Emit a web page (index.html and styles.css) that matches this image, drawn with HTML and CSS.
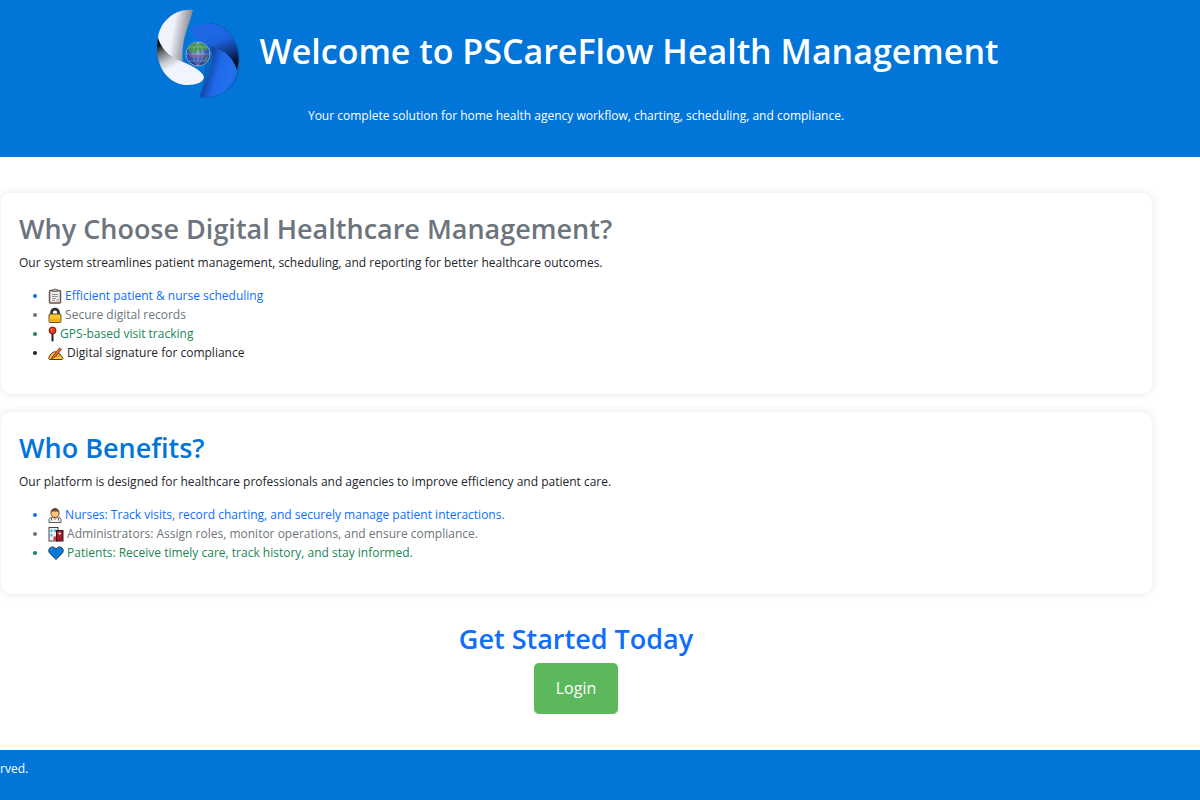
FILE: index.html
```html
<!DOCTYPE html>
<html lang="en">
<head>
    <meta charset="UTF-8">
    <meta name="viewport" content="width=device-width, initial-scale=1.0">
    <title>PSCareFlow Health Management</title>
    <link rel="stylesheet" href="styles.css">
</head>
<body>
    <header class="header">
        <div class="header-inner">
            <div class="brand">
                <svg class="logo" viewBox="-1 -1 90 90" aria-hidden="true">
                    <defs>
                        <linearGradient id="silverTop" gradientUnits="userSpaceOnUse" x1="3" y1="24" x2="38" y2="30">
                            <stop offset="0.4" stop-color="#f0f2fc"/>
                            <stop offset="0.8" stop-color="#96979f"/>
                            <stop offset="1" stop-color="#77777c"/>
                        </linearGradient>
                        <linearGradient id="silverLow" gradientUnits="userSpaceOnUse" x1="8" y1="34" x2="24" y2="66">
                            <stop offset="0" stop-color="#111"/>
                            <stop offset="0.2" stop-color="#666"/>
                            <stop offset="0.5" stop-color="#c6c8d0"/>
                            <stop offset="0.75" stop-color="#f2f4ff"/>
                        </linearGradient>
                        <linearGradient id="blueTop" gradientUnits="userSpaceOnUse" x1="62" y1="20" x2="76" y2="56">
                            <stop offset="0" stop-color="#1e68e8"/>
                            <stop offset="0.3" stop-color="#1d62dc"/>
                            <stop offset="0.65" stop-color="#103a8c"/>
                            <stop offset="1" stop-color="#020a20"/>
                        </linearGradient>
                        <linearGradient id="blueLow" gradientUnits="userSpaceOnUse" x1="44" y1="66" x2="72" y2="74">
                            <stop offset="0" stop-color="#0a2c80"/>
                            <stop offset="0.6" stop-color="#1f6ae8"/>
                            <stop offset="1" stop-color="#2270ee"/>
                        </linearGradient>
                        <radialGradient id="globe" cx="0.5" cy="0.4" r="0.6">
                            <stop offset="0" stop-color="#7fa6e0"/>
                            <stop offset="0.7" stop-color="#2f4fae"/>
                            <stop offset="1" stop-color="#27387c"/>
                        </radialGradient>
                    </defs>
                    <path d="M46 89C64 90 80 80 84 63C88 40 80 19 56 13Z" fill="#0864bd"/>
                    <path d="M38 1C20-1 4 13 3 30C8 44 17 49 28 54C26 30 33 20 38 1Z" fill="url(#silverTop)"/>
                    <path d="M3 29C8 44 18 49 28 53C38 57 47 62 49 68C49 73 41 76 33 76C14 76-2 58 3 29Z" fill="url(#silverLow)"/>
                    <path d="M56 36C68 40 78 48 82 61C80 78 65 90 45 88C46 78 62 60 56 36Z" fill="url(#blueLow)"/>
                    <path d="M35 21C44 12 66 12 76 27C84 38 85 50 82 61C78 48 70 42 58 38C48 34 38 30 35 21Z" fill="url(#blueTop)"/>
                    <circle cx="43" cy="45" r="12" fill="url(#globe)" stroke="#8fa6c8" stroke-width="1"/>
                    <path d="M33 40C35 34 40 33 45 34L51 36L53 41L48 40L46 44L43 41L39 45L35 43ZM50 50L53 46L52 51L48 53Z" fill="#48924b"/>
                    <path d="M31 45H55M43 33V57M34 38H52M34 52H52M43 33Q33 45 43 57M43 33Q53 45 43 57" fill="none" stroke="#b9cbe8" stroke-width="0.4"/>
                    <path d="M34 47H51" stroke="#c4455c" stroke-width="1"/>
                </svg>
                <h1>Welcome to PSCareFlow Health Management</h1>
            </div>
            <p>Your complete solution for home health agency workflow, charting, scheduling, and compliance.</p>
        </div>
    </header>

    <main class="content">
        <section class="card">
            <h2 class="text-secondary">Why Choose Digital Healthcare Management?</h2>
            <p>Our system streamlines patient management, scheduling, and reporting for better healthcare outcomes.</p>
            <ul>
                <li class="text-primary">
                    <svg class="icon" viewBox="0 0 14 16" aria-hidden="true">
                        <rect x="1.5" y="2.5" width="11" height="12.5" rx="1" fill="#eee" stroke="#6f5145" stroke-width="1.5"/>
                        <path d="M4.5 3.5V1.8H6L7 .6L8 1.8H9.5V3.5Z" fill="#aaa" stroke="#555" stroke-width="0.7"/>
                        <path d="M4 6.5H10M4 8.5H10M4 10.5H8M4 12.5H7" stroke="#888" stroke-width="0.9"/>
                        <path d="M8.5 14.5V11H12Z" fill="#bbb"/>
                    </svg>
                    Efficient patient &amp; nurse scheduling
                </li>
                <li class="text-secondary">
                    <svg class="icon" viewBox="0 0 14 16" aria-hidden="true">
                        <path d="M3.5 8V5.5C3.5 1 10.5 1 10.5 5.5V8" fill="none" stroke="#222" stroke-width="2.6"/>
                        <path d="M3.5 8V5.5C3.5 1 10.5 1 10.5 5.5V8" fill="none" stroke="#555" stroke-width="0.7"/>
                        <rect x="1" y="7" width="12" height="8.5" rx="1" fill="#ffc72c" stroke="#403010" stroke-width="0.8"/>
                        <path d="M1.5 12H12.5V14.5H1.5Z" fill="#f5a913"/>
                    </svg>
                    Secure digital records
                </li>
                <li class="text-success">
                    <svg class="icon icon-pin" viewBox="0 0 9 16" aria-hidden="true">
                        <path d="M4.5 7V14.5" stroke="#222" stroke-width="2" stroke-linecap="round"/>
                        <circle cx="4.5" cy="4.5" r="3.5" fill="#e83a1c" stroke="#451510" stroke-width="0.8"/>
                        <circle cx="3.6" cy="3.5" r="1" fill="#ff8066"/>
                    </svg>
                    GPS-based visit tracking
                </li>
                <li class="text-dark">
                    <svg class="icon icon-wide" viewBox="0 0 16 16" aria-hidden="true">
                        <path d="M.7 13.5C1 10 4 7.5 7 6.5L9 8L12 9L15 13.5Q15 14.5 13 14.5H1.5Z" fill="#ffc83d" stroke="#3b2a12" stroke-width="0.9"/>
                        <path d="M4 12L11.5 3L13.5 4.5L6.5 12.5L3.5 13.5Z" fill="#ed6c20" stroke="#53240d" stroke-width="0.7"/>
                        <path d="M8 12L10 10.5L12 11" fill="none" stroke="#b77a14" stroke-width="1"/>
                    </svg>
                    Digital signature for compliance
                </li>
            </ul>
        </section>

        <section class="card">
            <h2 class="text-brand">Who Benefits?</h2>
            <p>Our platform is designed for healthcare professionals and agencies to improve efficiency and patient care.</p>
            <ul>
                <li class="text-primary">
                    <svg class="icon" viewBox="0 0 14 16" aria-hidden="true">
                        <path d="M1 15.5V13C1 10.5 3.5 10 7 10S13 10.5 13 13V15.5Z" fill="#f3f5f7" stroke="#333" stroke-width="0.8"/>
                        <path d="M5 9H9V11L7 13.5L5 11Z" fill="#efad55"/>
                        <path d="M3 5.5C3 .5 11 .5 11 5.5V7C11 9 9 10.5 7 10.5S3 9 3 7Z" fill="#ffc77d" stroke="#4b2818" stroke-width="0.8"/>
                        <path d="M2.7 6C2.5-.5 11.5-.5 11.3 6L10 4.5L4 4.5Z" fill="#70442f"/>
                        <path d="M3.5 11V13.5M10.5 11V13.5" stroke="#257bd0" stroke-width="1.2"/>
                    </svg>
                    Nurses: Track visits, record charting, and securely manage patient interactions.
                </li>
                <li class="text-secondary">
                    <svg class="icon icon-wide" viewBox="0 0 16 16" aria-hidden="true">
                        <rect x="1" y="1.5" width="9" height="13.5" fill="#edf1f4" stroke="#444" stroke-width="1"/>
                        <rect x="8.5" y="4.5" width="6.5" height="10.5" fill="#a61b2b" stroke="#35181c" stroke-width="1"/>
                        <path d="M2.5 3.5H4.5V6H2.5ZM6 3.5H8V6H6ZM2.5 8H4.5V10.5H2.5Z" fill="#35bde6"/>
                        <path d="M5.5 10.5H8V14.5H5.5Z" fill="#d5303b"/>
                        <path d="M10.5 7.5H13M11.75 6.25V8.75" stroke="#fff" stroke-width="1"/>
                    </svg>
                    Administrators: Assign roles, monitor operations, and ensure compliance.
                </li>
                <li class="text-success">
                    <svg class="icon icon-wide" viewBox="0 0 16 16" aria-hidden="true">
                        <path d="M8 14.5L2 8.5C-.5 6 1 2 4.5 2C6.2 2 7.3 3 8 4.2C8.7 3 9.8 2 11.5 2C15 2 16.5 6 14 8.5Z" fill="#0878d8" stroke="#10273e" stroke-width="0.9"/>
                        <path d="M2.5 5.5Q3 3.5 5 3.3" fill="none" stroke="#48a9ed" stroke-width="0.9"/>
                    </svg>
                    Patients: Receive timely care, track history, and stay informed.
                </li>
            </ul>
        </section>

        <section class="cta">
            <h2 class="text-primary">Get Started Today</h2>
            <a href="#login" class="btn-login">Login</a>
        </section>
    </main>

    <footer class="footer">
        <p>rved.</p>
    </footer>
</body>
</html>
```

FILE: styles.css
```css
* {
    box-sizing: border-box;
}

body {
    margin: 0;
    min-height: 100vh;
    display: flex;
    flex-direction: column;
    background: #fff;
    color: #212529;
    font-family: "Segoe UI", "Open Sans", "Noto Sans", sans-serif;
    font-size: 12px;
    line-height: 19px;
}

h1, h2, p, ul {
    margin: 0;
}

.header {
    background: #0275d8;
    color: #fff;
    padding: 8px 0 32px;
}

.header-inner,
.content {
    width: 96%;
    text-align: center;
}

.brand {
    display: flex;
    justify-content: center;
    align-items: center;
    gap: 16px;
    margin-bottom: 8px;
}

.logo {
    width: 90px;
    height: 90px;
    flex-shrink: 0;
}

h1 {
    font-size: 34px;
    line-height: 44px;
    font-weight: 600;
    padding-bottom: 4px;
}

h2 {
    font-size: 27px;
    line-height: 36px;
    font-weight: 600;
    margin-bottom: 6px;
}

.content {
    flex: 1;
    padding: 36px 0;
}

.card {
    background: #fff;
    margin: 0 0 18px 1px;
    padding: 18px;
    border-radius: 10px;
    box-shadow: 0 0 10px rgba(0, 0, 0, 0.1);
    text-align: left;
}

.card ul {
    margin: 14px 0;
    padding-left: 29px;
}

.icon {
    width: 14px;
    height: 16px;
    vertical-align: -4px;
}

.icon-pin {
    width: 9px;
}

.icon-wide {
    width: 16px;
}

.text-primary {
    color: #0d6efd;
}

.text-secondary {
    color: #6c757d;
}

.text-success {
    color: #198754;
}

.text-dark {
    color: #212529;
}

.text-brand {
    color: #0275d8;
}

.cta {
    padding-top: 9px;
}

.btn-login {
    display: inline-block;
    padding: 16px 22px;
    border-radius: 5px;
    background: #5cb85c;
    color: #fff;
    font-size: 16px;
    text-decoration: none;
}

.btn-login:hover {
    background: #4cae4c;
}

.footer {
    background: #0275d8;
    color: #fff;
    padding: 9px 0 22px;
}
```
